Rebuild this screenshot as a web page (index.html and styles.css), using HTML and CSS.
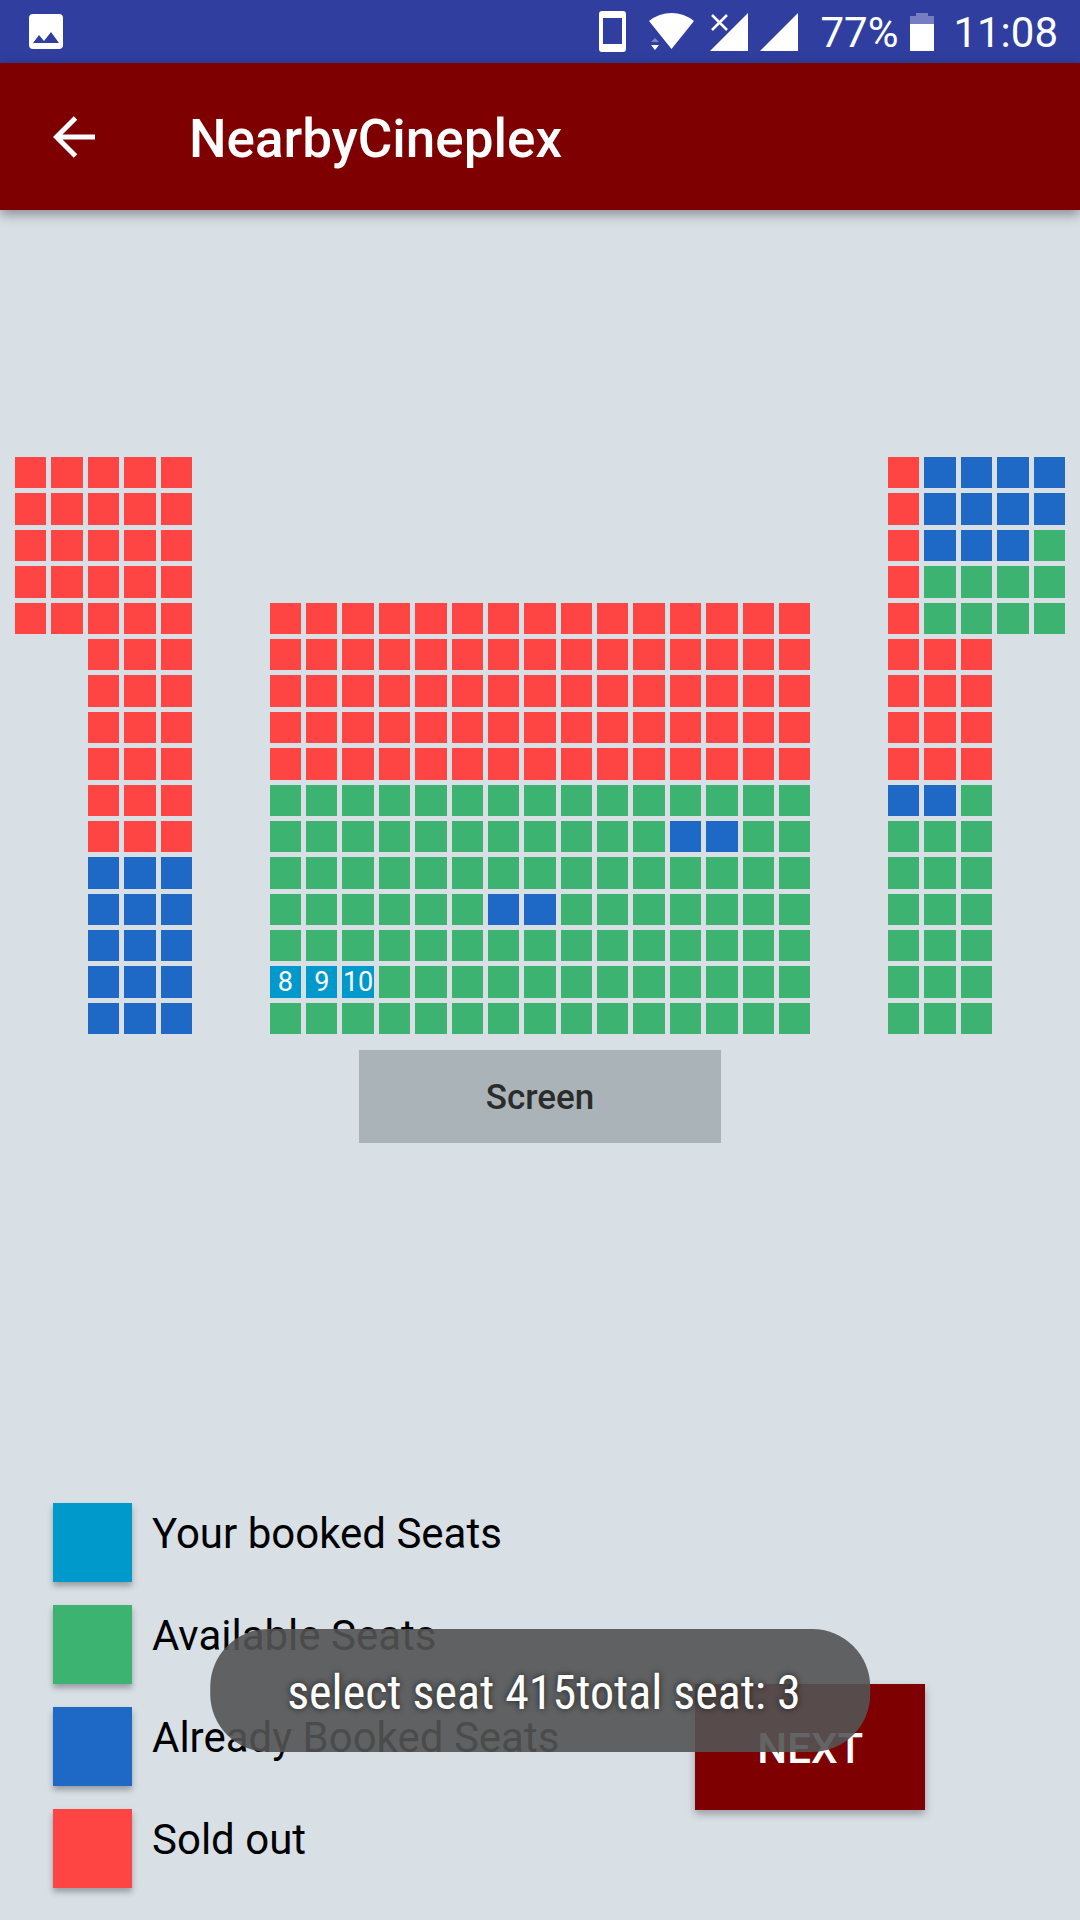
FILE: index.html
```html
<!DOCTYPE html>
<html lang="en">
<head>
  <meta charset="utf-8">
  <meta name="viewport" content="width=device-width, initial-scale=1">
  <title>NearbyCineplex</title>
  <link rel="stylesheet" href="styles.css">
</head>
<body>
  <div class="status-bar">
    <svg class="icon-image" viewBox="0 0 34 35" aria-hidden="true"><path fill="#fff" fill-rule="evenodd" d="M4 0h26a4 4 0 0 1 4 4v27a4 4 0 0 1-4 4H4a4 4 0 0 1-4-4V4a4 4 0 0 1 4-4zM4 29h26L22 18l-7 9-5-6z"/></svg>
    <div class="status-icons">
      <svg class="icon-phone" viewBox="0 0 27 41" aria-hidden="true"><path fill="#fff" fill-rule="evenodd" d="M3 0h21a3 3 0 0 1 3 3v35a3 3 0 0 1-3 3H3a3 3 0 0 1-3-3V3a3 3 0 0 1 3-3zM4 7v26h19V7z"/></svg>
      <svg class="icon-wifi" viewBox="0 0 45 37" aria-hidden="true"><path fill="#fff" d="M0 8Q10 0 22.500 0T45 8L22.500 36z"/><path fill="#7d85c3" d="M2 29l4-4 4 4z"/><path fill="#fff" d="M2 32h8l-4 5z"/></svg>
      <svg class="icon-signal" viewBox="0 0 38 38" aria-hidden="true"><path fill="#fff" d="M38 0v38H0z"/><path fill="none" stroke="#303f9f" stroke-width="7" d="M2 2l15 15M17 2L2 17"/><path fill="none" stroke="#fff" stroke-width="2.500" d="M2 2l15 15M17 2L2 17"/></svg>
      <svg class="icon-signal" viewBox="0 0 38 38" aria-hidden="true"><path fill="#fff" d="M38 0v38H0z"/></svg>
      <span class="battery-level">77%</span>
      <svg class="icon-battery" viewBox="0 0 24 38" aria-hidden="true"><path fill="#757ec0" d="M6 0h12v3h6v8H0V3h6z"/><path fill="#fff" d="M0 11h24v27H0z"/></svg>
      <span class="clock">11:08</span>
    </div>
  </div>

  <header class="app-bar">
    <button class="back" type="button" aria-label="Back">
      <svg viewBox="0 0 42 42" aria-hidden="true"><path fill="none" stroke="#fff" stroke-width="5" d="M42 21H4M22.500 2L3.500 21l19 19"/></svg>
    </button>
    <h1 class="title">NearbyCineplex</h1>
  </header>

  <main class="content">
    <section class="hall" aria-label="Seats">
      <div class="seats" id="seats"></div>
      <div class="screen">Screen</div>
    </section>

    <section class="footer">
      <ul class="legend">
        <li class="legend-item"><span class="swatch mine"></span><span>Your booked Seats</span></li>
        <li class="legend-item"><span class="swatch free"></span><span>Available Seats</span></li>
        <li class="legend-item"><span class="swatch booked"></span><span>Already Booked Seats</span></li>
        <li class="legend-item"><span class="swatch sold"></span><span>Sold out</span></li>
      </ul>
      <button class="next" type="button">NEXT</button>
    </section>
  </main>

  <div class="toast" role="status">select seat 415total seat: 3</div>
  <script src="seats.js"></script>
</body>
</html>
```
FILE: styles.css
```css
* {
  box-sizing: border-box;
}

body {
  margin: 0;
  min-height: 100vh;
  display: flex;
  flex-direction: column;
  position: relative;
  background: #d8e0e6;
  color: #000;
  font-family: Roboto, "Noto Sans", sans-serif;
  font-size: 42px;
  line-height: 49px;
}

button {
  border: 0;
  padding: 0;
  font-family: inherit;
}

svg {
  display: block;
  flex: none;
}

.status-bar {
  height: 63px;
  padding: 0 22px 0 29px;
  display: flex;
  align-items: center;
  justify-content: space-between;
  background: #303f9f;
  color: #fff;
}

.status-icons {
  display: flex;
  align-items: center;
  gap: 12px;
}

.icon-image {
  width: 34px;
  height: 35px;
}

.icon-phone {
  width: 27px;
  height: 41px;
  margin-right: 11px;
}

.icon-wifi {
  width: 45px;
  height: 37px;
  margin-right: 4px;
}

.icon-signal {
  width: 38px;
  height: 38px;
}

.icon-battery {
  width: 24px;
  height: 38px;
}

.battery-level,
.clock {
  padding-top: 2px;
}

.battery-level {
  margin-left: 10px;
}

.clock {
  margin-left: 7px;
}

.app-bar {
  height: 147px;
  padding: 0 53px;
  display: flex;
  align-items: center;
  gap: 94px;
  background: #7f0000;
  color: #fff;
  box-shadow: 0 4px 12px rgba(0, 0, 0, 0.4);
}

.back {
  background: none;
}

.back svg {
  width: 42px;
  height: 42px;
}

.title {
  margin: 0;
  padding-top: 4px;
  font-size: 53px;
  line-height: 60px;
  font-weight: 500;
}

.content {
  flex: 1;
  display: flex;
  flex-direction: column;
  justify-content: space-between;
  gap: 48px;
  padding-top: 247px;
}

.hall {
  display: flex;
  flex-direction: column;
  align-items: center;
  gap: 16px;
  padding: 0 15px;
}

.seats {
  width: 100%;
  display: grid;
  grid-template-columns: repeat(29, minmax(0, 1fr));
  gap: 5px;
}

.seat {
  aspect-ratio: 1;
  min-width: 0;
  display: flex;
  align-items: center;
  justify-content: center;
  color: #fff;
  font-size: 27px;
  line-height: 31px;
}

.mine {
  background: #0099cc;
}

.free {
  background: #3cb371;
}

.booked {
  background: #1e68c6;
}

.sold {
  background: #ff4444;
}

.screen {
  width: 34.5%;
  padding: 23px 0 21px;
  background: #a9b3b8;
  color: #2b2b2b;
  font-size: 35px;
  font-weight: 500;
  text-align: center;
}

.footer {
  display: flex;
  align-items: flex-end;
  justify-content: space-between;
  padding: 0 155px 32px 53px;
}

.legend {
  margin: 0;
  padding: 0;
  list-style: none;
  display: flex;
  flex-direction: column;
  gap: 23px;
}

.legend-item {
  display: flex;
  gap: 20px;
}

.legend-item span:last-child {
  padding-top: 6px;
}

.swatch {
  flex: none;
  width: 79px;
  height: 79px;
  box-shadow: 0 4px 6px rgba(0, 0, 0, 0.3);
}

.next {
  margin-bottom: 78px;
  padding: 40px 62px 37px;
  background: #7f0000;
  color: #fff;
  font-size: 42px;
  line-height: 49px;
  font-weight: 500;
  box-shadow: 0 4px 8px rgba(0, 0, 0, 0.3);
}

.toast {
  position: absolute;
  bottom: 168px;
  left: 50%;
  transform: translateX(-50%);
  padding: 36px 69px 31px 77px;
  border-radius: 58px;
  background: rgba(83, 83, 83, 0.9);
  color: #fff;
  font-family: "Roboto Condensed", Roboto, sans-serif;
  font-size: 48px;
  line-height: 56px;
  white-space: nowrap;
  text-shadow: 0 0 6px rgba(0, 0, 0, 0.7);
}
```
FILE: seats.js
```js
// s = sold out, b = already booked, f = available, m = your seat, . = aisle
const rows = [
  "sssss...................sbbbb",
  "sssss...................sbbbb",
  "sssss...................sbbbf",
  "sssss...................sffff",
  "sssss..sssssssssssssss..sffff",
  "..sss..sssssssssssssss..sss..",
  "..sss..sssssssssssssss..sss..",
  "..sss..sssssssssssssss..sss..",
  "..sss..sssssssssssssss..sss..",
  "..sss..fffffffffffffff..bbf..",
  "..sss..fffffffffffbbff..fff..",
  "..bbb..fffffffffffffff..fff..",
  "..bbb..ffffffbbfffffff..fff..",
  "..bbb..fffffffffffffff..fff..",
  "..bbb..mmmffffffffffff..fff..",
  "..bbb..fffffffffffffff..fff.."
];
const kinds = { s: "sold", b: "booked", f: "free", m: "mine" };
const map = document.getElementById("seats");
let number = 8;

rows.forEach((row, r) => {
  [...row].forEach((code, c) => {
    if (code === ".") {
      map.appendChild(document.createElement("span"));
      return;
    }
    const seat = document.createElement("button");
    seat.type = "button";
    seat.className = "seat " + kinds[code];
    seat.setAttribute("aria-label", `Row ${r + 1}, seat ${c + 1}, ${kinds[code]}`);
    if (code === "m") seat.textContent = number++;
    map.appendChild(seat);
  });
});
```
